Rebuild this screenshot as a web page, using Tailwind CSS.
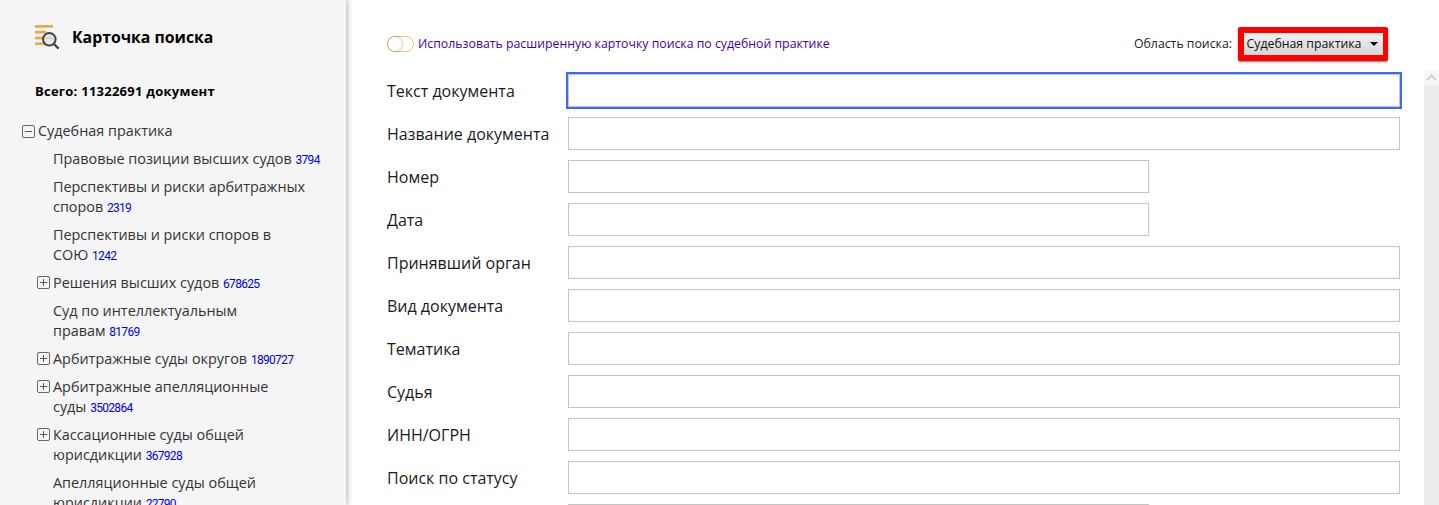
<!DOCTYPE html>
<html lang="ru"><head><meta charset="utf-8">
<script src="https://cdn.jsdelivr.net/npm/@tailwindcss/browser@4"></script>
<title>Карточка поиска</title></head>
<body class="m-0 bg-white overflow-hidden font-['Open_Sans','Noto_Sans',sans-serif]">
<div class="flex h-[505px] w-[1439px] overflow-hidden">
<aside class="w-[346px] shrink-0 h-[505px] overflow-hidden bg-[#f5f5f5] shadow-[2px_0_5px_rgba(0,0,0,0.25)] z-10 relative">
  <div class="flex items-center pl-[35px] pt-[25px] h-[50px]">
    <svg width="25" height="25" viewBox="0 0 25 25" class="shrink-0">
      <rect x="0" y="0" width="18" height="2.7" fill="#e8a94c"/><rect x="0" y="5.8" width="11" height="2.7" fill="#e8a94c"/><rect x="0" y="11.7" width="18" height="2.7" fill="#e8a94c"/><rect x="0" y="17.4" width="10" height="2.7" fill="#e8a94c"/>
      <circle cx="14.3" cy="14.3" r="6.3" fill="#e3e0f0" fill-opacity="0.72" stroke="#444" stroke-width="2"/>
      <path d="M19 19l4.6 4.6" stroke="#444" stroke-width="2.4"/>
    </svg>
    <h1 class="ml-[12px] text-[15.8px] font-bold text-black leading-none">Карточка поиска</h1>
  </div>
  <p class="pl-[35px] mt-[33px] text-[13px] font-bold text-black leading-[16px] tracking-[0.25px]">Всего: 11322691 документ</p>
  <ul class="mt-[22px] text-[#333] text-[14.4px] leading-[20px]">
    <li class="pl-[22px] flex items-center h-[20px]"><span class="w-[13px] h-[13px] border border-[#666] rounded-[2px] mr-[3px] flex items-center justify-center shrink-0"><span class="w-[7px] h-px bg-[#555]"></span></span>Судебная практика</li>
    <li class="pl-[53px] mt-[8px] pr-[20px]">Правовые позиции высших судов <a class="text-[12px] leading-none tracking-[-0.7px] font-['Roboto',sans-serif] text-[#0000ee]">3794</a></li>
    <li class="pl-[53px] mt-[8px] w-[320px]">Перспективы и риски арбитражных<br>споров <a class="text-[12px] leading-none tracking-[-0.7px] font-['Roboto',sans-serif] text-[#0000ee]">2319</a></li>
    <li class="pl-[53px] mt-[8px]">Перспективы и риски споров в<br>СОЮ <a class="text-[12px] leading-none tracking-[-0.7px] font-['Roboto',sans-serif] text-[#0000ee]">1242</a></li>
    <li class="pl-[37px] mt-[8px] flex"><span class="w-[13px] h-[13px] mt-[3px] border border-[#666] rounded-[2px] mr-[3px] relative shrink-0"><span class="absolute left-[2px] top-[5px] w-[7px] h-px bg-[#555]"></span><span class="absolute left-[5px] top-[2px] w-px h-[7px] bg-[#555]"></span></span><span>Решения высших судов <a class="text-[12px] leading-none tracking-[-0.7px] font-['Roboto',sans-serif] text-[#0000ee]">678625</a></span></li>
    <li class="pl-[53px] mt-[8px]">Суд по интеллектуальным<br>правам <a class="text-[12px] leading-none tracking-[-0.7px] font-['Roboto',sans-serif] text-[#0000ee]">81769</a></li>
    <li class="pl-[37px] mt-[8px] flex"><span class="w-[13px] h-[13px] mt-[3px] border border-[#666] rounded-[2px] mr-[3px] relative shrink-0"><span class="absolute left-[2px] top-[5px] w-[7px] h-px bg-[#555]"></span><span class="absolute left-[5px] top-[2px] w-px h-[7px] bg-[#555]"></span></span><span>Арбитражные суды округов <a class="text-[12px] leading-none tracking-[-0.7px] font-['Roboto',sans-serif] text-[#0000ee]">1890727</a></span></li>
    <li class="pl-[37px] mt-[8px] flex"><span class="w-[13px] h-[13px] mt-[3px] border border-[#666] rounded-[2px] mr-[3px] relative shrink-0"><span class="absolute left-[2px] top-[5px] w-[7px] h-px bg-[#555]"></span><span class="absolute left-[5px] top-[2px] w-px h-[7px] bg-[#555]"></span></span><span>Арбитражные апелляционные<br>суды <a class="text-[12px] leading-none tracking-[-0.7px] font-['Roboto',sans-serif] text-[#0000ee]">3502864</a></span></li>
    <li class="pl-[37px] mt-[8px] flex"><span class="w-[13px] h-[13px] mt-[3px] border border-[#666] rounded-[2px] mr-[3px] relative shrink-0"><span class="absolute left-[2px] top-[5px] w-[7px] h-px bg-[#555]"></span><span class="absolute left-[5px] top-[2px] w-px h-[7px] bg-[#555]"></span></span><span>Кассационные суды общей<br>юрисдикции <a class="text-[12px] leading-none tracking-[-0.7px] font-['Roboto',sans-serif] text-[#0000ee]">367928</a></span></li>
    <li class="pl-[53px] mt-[8px]">Апелляционные суды общей<br>юрисдикции <a class="text-[12px] leading-none tracking-[-0.7px] font-['Roboto',sans-serif] text-[#0000ee]">22790</a></li>
  </ul>
</aside>
<main class="flex-1 min-w-0 relative h-[505px] overflow-hidden">
  <div class="flex items-center justify-between pl-[41px] pr-[51px] pt-[27px] h-[61px]">
    <label class="flex items-center">
      <span class="w-[27px] h-[16px] rounded-full border border-[#f0c070] bg-white relative mr-[4px] shrink-0"><span class="absolute left-0 top-0 w-[14px] h-[14px] rounded-full bg-white shadow-[0_0_3px_rgba(0,0,0,0.4)]"></span></span>
      <span class="text-[12.3px] text-[#4400aa]">Использовать расширенную карточку поиска по судебной практике</span>
    </label>
    <div class="flex items-center">
      <span class="text-[12.3px] text-[#222] mr-[6px]">Область поиска:</span>
      <div class="w-[150px] h-[34px] bg-[#f00] rounded-[2px] shadow-[0_1px_2px_rgba(0,0,0,0.5)] flex items-center justify-center">
        <div class="w-[139px] h-[22px] bg-gradient-to-b from-[#f3f3f3] to-[#d5d5d5] flex items-center justify-between pl-[3px] pr-[5px] text-[12.3px] text-[#111]"><span>Судебная практика</span><span class="w-0 h-0 border-x-[4px] border-x-transparent border-t-[4px] border-t-black"></span></div>
      </div>
    </div>
  </div>
  <form class="pl-[41px] pr-[39px] pt-[13px] flex flex-col gap-[10px] text-[16px] text-[#1a1a1a]">
    <div class="flex items-center h-[33px]"><label class="w-[181px] shrink-0">Текст документа</label><div class="flex-1 h-[33px] border border-[#c4c4c4] shadow-[0_0_0_2px_#3b6cf5]"></div></div>
    <div class="flex items-center h-[33px]"><label class="w-[181px] shrink-0">Название документа</label><div class="flex-1 h-[33px] border border-[#c4c4c4]"></div></div>
    <div class="flex items-center h-[33px]"><label class="w-[181px] shrink-0">Номер</label><div class="w-[581px] h-[33px] border border-[#c4c4c4]"></div></div>
    <div class="flex items-center h-[33px]"><label class="w-[181px] shrink-0">Дата</label><div class="w-[581px] h-[33px] border border-[#c4c4c4]"></div></div>
    <div class="flex items-center h-[33px]"><label class="w-[181px] shrink-0">Принявший орган</label><div class="flex-1 h-[33px] border border-[#c4c4c4]"></div></div>
    <div class="flex items-center h-[33px]"><label class="w-[181px] shrink-0">Вид документа</label><div class="flex-1 h-[33px] border border-[#c4c4c4]"></div></div>
    <div class="flex items-center h-[33px]"><label class="w-[181px] shrink-0">Тематика</label><div class="flex-1 h-[33px] border border-[#c4c4c4]"></div></div>
    <div class="flex items-center h-[33px]"><label class="w-[181px] shrink-0">Судья</label><div class="flex-1 h-[33px] border border-[#c4c4c4]"></div></div>
    <div class="flex items-center h-[33px]"><label class="w-[181px] shrink-0">ИНН/ОГРН</label><div class="flex-1 h-[33px] border border-[#c4c4c4]"></div></div>
    <div class="flex items-center h-[33px]"><label class="w-[181px] shrink-0">Поиск по статусу</label><div class="flex-1 h-[33px] border border-[#c4c4c4]"></div></div>
    <div class="flex items-center h-[33px]"><label class="w-[181px] shrink-0"></label><div class="w-[581px] h-[33px] border border-[#c4c4c4]"></div></div>
  </form>
  <div class="absolute right-0 top-[70px] bottom-0 w-[15px] bg-[#ededed]">
    <div class="h-[15px] bg-[#f7f7f7] flex items-center justify-center"><svg width="11" height="7" viewBox="0 0 11 7"><path d="M1 6l4.5-4.5L10 6" fill="none" stroke="#c8c8c8" stroke-width="1.6"/></svg></div>
  </div>
</main>
</div>
</body></html>
